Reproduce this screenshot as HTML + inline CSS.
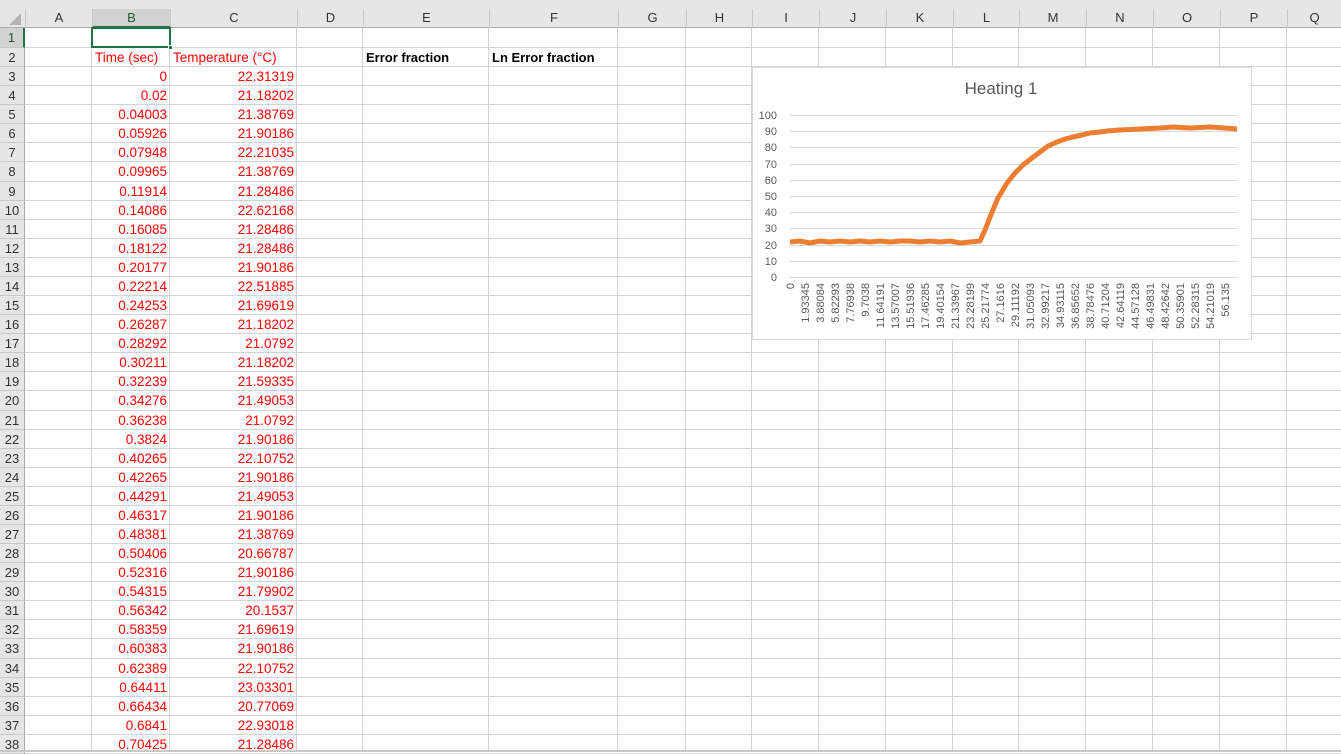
<!DOCTYPE html>
<html><head><meta charset="utf-8"><style>
*{margin:0;padding:0;box-sizing:border-box}
body{width:1341px;height:752px;overflow:hidden;background:#fff;font-family:"Liberation Sans",Arial,sans-serif;position:relative}
.hdr{position:absolute;left:0;top:0;width:1341px;height:28px;background:#e6e6e6;border-bottom:1px solid #ababab}
.ch{position:absolute;top:9px;height:19px;border-left:1px solid #c8c8c8;font-size:13px;color:#333;text-align:center;line-height:18px}
.rh{position:absolute;left:0;width:25px;background:#e6e6e6;border-right:1px solid #ababab;border-bottom:1px solid #c8c8c8;font-size:13px;color:#333;text-align:center}
.hl{position:absolute;left:25px;width:1316px;height:1px;background:#d4d4d4}
.vl{position:absolute;top:28px;width:1px;height:724px;background:#d4d4d4}
.c{position:absolute;font-size:13.5px;color:#f00;text-align:right;white-space:nowrap}
.b{position:absolute;font-size:13px;font-weight:bold;color:#000}
</style></head><body>
<div class="hdr"></div>
<svg style="position:absolute;left:8px;top:12px" width="14" height="14"><polygon points="13,1 13,13 1,13" fill="#b4b4b4"/></svg>
<div id="g"></div>
<div class="ch" style="left:25px;width:67px">A</div>
<div class="ch" style="left:92px;width:78px;background:#d2d2d2;border-bottom:2px solid #217346;color:#1d5a36">B</div>
<div class="ch" style="left:170px;width:127px">C</div>
<div class="ch" style="left:297px;width:66px">D</div>
<div class="ch" style="left:363px;width:126px">E</div>
<div class="ch" style="left:489px;width:129px">F</div>
<div class="ch" style="left:618px;width:68px">G</div>
<div class="ch" style="left:686px;width:66px">H</div>
<div class="ch" style="left:752px;width:67px">I</div>
<div class="ch" style="left:819px;width:67px">J</div>
<div class="ch" style="left:886px;width:67px">K</div>
<div class="ch" style="left:953px;width:66px">L</div>
<div class="ch" style="left:1019px;width:67px">M</div>
<div class="ch" style="left:1086px;width:67px">N</div>
<div class="ch" style="left:1153px;width:67px">O</div>
<div class="ch" style="left:1220px;width:67px">P</div>
<div class="ch" style="left:1287px;width:54px">Q</div>
<div class="b" style="left:366px;top:50px">Error fraction</div>
<div class="b" style="left:492px;top:50px">Ln Error fraction</div>
<script>
var cols=[25,92,170,297,363,489,618,686,752,819,886,953,1019,1086,1153,1220,1287];
var B=["Time (sec)","0","0.02","0.04003","0.05926","0.07948","0.09965","0.11914","0.14086","0.16085","0.18122","0.20177","0.22214","0.24253","0.26287","0.28292","0.30211","0.32239","0.34276","0.36238","0.3824","0.40265","0.42265","0.44291","0.46317","0.48381","0.50406","0.52316","0.54315","0.56342","0.58359","0.60383","0.62389","0.64411","0.66434","0.6841","0.70425"];
var C=["Temperature (°C)","22.31319","21.18202","21.38769","21.90186","22.21035","21.38769","21.28486","22.62168","21.28486","21.28486","21.90186","22.51885","21.69619","21.18202","21.0792","21.18202","21.59335","21.49053","21.0792","21.90186","22.10752","21.90186","21.49053","21.90186","21.38769","20.66787","21.90186","21.79902","20.1537","21.69619","21.90186","22.10752","23.03301","20.77069","22.93018","21.28486"];
var h='';
function rt(n){return n==1?28:48+(n-2)*19.08;}
for(var i=0;i<cols.length;i++)h+='<div class="vl" style="left:'+(cols[i]-1)+'px"></div>';
for(var n=1;n<=38;n++){var t=rt(n),b=rt(n+1);var rt0=Math.round(t),rb=Math.round(b);
h+='<div class="hl" style="top:'+(rb-1)+'px"></div>';
h+='<div class="rh" style="top:'+rt0+'px;height:'+(rb-rt0)+'px;line-height:'+(rb-rt0)+'px;'+(n==1?'background:#d2d2d2;border-right:2px solid #217346;color:#1d5a36':'')+'">'+n+'</div>';
if(n>=2){var k=n-2;
if(n==2){h+='<div class="c" style="left:95px;top:'+(t+2)+'px;text-align:left">'+B[k]+'</div><div class="c" style="left:173px;top:'+(t+2)+'px;text-align:left">'+C[k]+'</div>';}
else{h+='<div class="c" style="left:92px;width:75px;top:'+(t+2)+'px">'+B[k]+'</div><div class="c" style="left:170px;width:124px;top:'+(t+2)+'px">'+C[k]+'</div>';}}}
document.getElementById('g').innerHTML=h;
</script>
<div style="position:absolute;left:91px;top:27px;width:80px;height:21px;border:2px solid #217346"></div>
<div style="position:absolute;left:168px;top:45px;width:5px;height:5px;background:#217346;border:1px solid #fff"></div>
<svg style="position:absolute;left:0;top:0" width="1341" height="752">
<rect x="752.5" y="67.5" width="499" height="272" fill="#fff" stroke="#d9d9d9"/>
<text x="1001" y="94" font-size="17" fill="#595959" text-anchor="middle" font-family="Liberation Sans">Heating 1</text>
<g stroke="#d9d9d9" stroke-width="1">
<line x1="789" x2="1238" y1="115.5" y2="115.5"/><line x1="789" x2="1238" y1="131.5" y2="131.5"/><line x1="789" x2="1238" y1="147.5" y2="147.5"/><line x1="789" x2="1238" y1="164.5" y2="164.5"/><line x1="789" x2="1238" y1="180.5" y2="180.5"/><line x1="789" x2="1238" y1="196.5" y2="196.5"/><line x1="789" x2="1238" y1="212.5" y2="212.5"/><line x1="789" x2="1238" y1="228.5" y2="228.5"/><line x1="789" x2="1238" y1="245.5" y2="245.5"/><line x1="789" x2="1238" y1="261.5" y2="261.5"/><line x1="789" x2="1238" y1="277.5" y2="277.5"/>
</g>
<g font-size="11" fill="#595959" text-anchor="end" font-family="Liberation Sans">
<text x="777" y="119">100</text><text x="777" y="135">90</text><text x="777" y="151">80</text><text x="777" y="168">70</text><text x="777" y="184">60</text><text x="777" y="200">50</text><text x="777" y="216">40</text><text x="777" y="232">30</text><text x="777" y="249">20</text><text x="777" y="265">10</text><text x="777" y="281">0</text>
</g>
<g font-size="11" fill="#595959" text-anchor="end" font-family="Liberation Sans">
<text transform="translate(794,283) rotate(-90)">0</text>
<text transform="translate(809,283) rotate(-90)">1.93345</text>
<text transform="translate(824,283) rotate(-90)">3.88084</text>
<text transform="translate(839,283) rotate(-90)">5.82293</text>
<text transform="translate(854,283) rotate(-90)">7.76938</text>
<text transform="translate(869,283) rotate(-90)">9.7038</text>
<text transform="translate(884,283) rotate(-90)">11.64191</text>
<text transform="translate(899,283) rotate(-90)">13.57007</text>
<text transform="translate(914,283) rotate(-90)">15.51936</text>
<text transform="translate(929,283) rotate(-90)">17.46285</text>
<text transform="translate(944,283) rotate(-90)">19.40154</text>
<text transform="translate(959,283) rotate(-90)">21.33967</text>
<text transform="translate(974,283) rotate(-90)">23.28199</text>
<text transform="translate(989,283) rotate(-90)">25.21774</text>
<text transform="translate(1004,283) rotate(-90)">27.1616</text>
<text transform="translate(1019,283) rotate(-90)">29.11192</text>
<text transform="translate(1034,283) rotate(-90)">31.05093</text>
<text transform="translate(1049,283) rotate(-90)">32.99217</text>
<text transform="translate(1064,283) rotate(-90)">34.93115</text>
<text transform="translate(1079,283) rotate(-90)">36.85652</text>
<text transform="translate(1094,283) rotate(-90)">38.78476</text>
<text transform="translate(1109,283) rotate(-90)">40.71204</text>
<text transform="translate(1124,283) rotate(-90)">42.64119</text>
<text transform="translate(1139,283) rotate(-90)">44.57128</text>
<text transform="translate(1154,283) rotate(-90)">46.49831</text>
<text transform="translate(1169,283) rotate(-90)">48.42642</text>
<text transform="translate(1184,283) rotate(-90)">50.35901</text>
<text transform="translate(1199,283) rotate(-90)">52.28315</text>
<text transform="translate(1214,283) rotate(-90)">54.21019</text>
<text transform="translate(1229,283) rotate(-90)">56.135</text>
</g>
<polyline fill="none" stroke="#ed7d31" stroke-width="5" stroke-linejoin="round" points="790,242 800,241 810,243 820,241 830,242 840,241 850,242 860,241 870,242 880,241 890,242 900,241 910,241 920,242 930,241 940,242 950,241 960,243 970,242 980,241 985,230 990,217 998,198 1007,183 1015,173 1023,165 1032,158 1040,152 1048,146 1057,142 1065,139 1073,137 1082,135 1090,133 1100,132 1107,131 1120,130 1140,129 1160,128 1173,127 1190,128 1210,127 1225,128 1237,129"/>
</svg>
<div style="position:absolute;left:0;top:750px;width:1341px;height:2px;background:#c8c8c8"></div>
</body></html>
